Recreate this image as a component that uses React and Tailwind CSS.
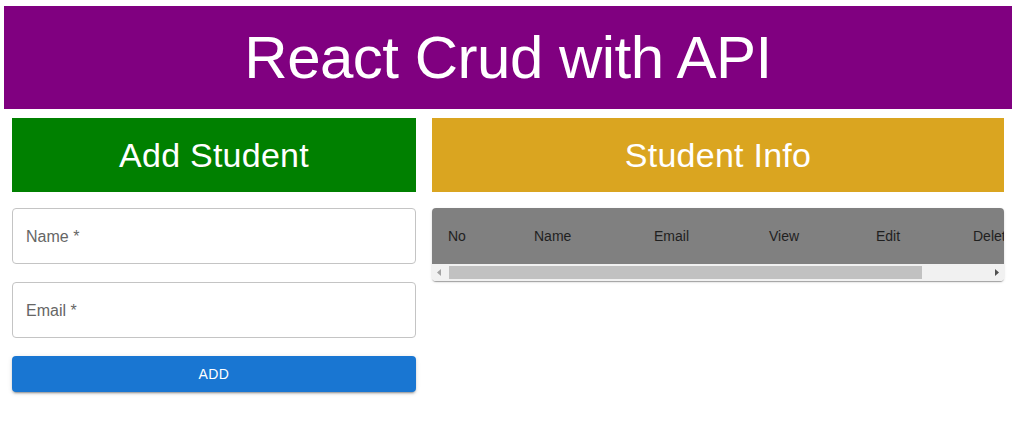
import React from "react";

const font = { fontFamily: '"Liberation Sans", Arial, sans-serif' };

function Field({ label }) {
  return (
    <div className="h-[56px] w-full rounded-[4px] border border-[#c4c4c4] bg-white flex items-center px-[13px]">
      <span className="text-[16px] leading-[23px] text-[#666666]">{label}</span>
    </div>
  );
}

const cols = [
  { label: "No", w: 86 },
  { label: "Name", w: 120 },
  { label: "Email", w: 115 },
  { label: "View", w: 107 },
  { label: "Edit", w: 97 },
  { label: "Delete", w: 125 },
];

export default function App() {
  return (
    <div className="min-h-[429px] w-[1020px] bg-white pt-[6px]" style={font}>
      <div className="ml-1 w-[1008px]">
        <div className="flex h-[103px] items-center justify-center bg-[#800080]">
          <h1 className="text-[60px] leading-[72px] font-light tracking-[-0.5px] text-white">
            React Crud with API
          </h1>
        </div>
        <div className="grid grid-cols-[404px_572px] gap-4 px-2 pt-[9px]">
          <div className="flex flex-col">
            <div className="flex h-[74px] items-center justify-center bg-[#008000]">
              <h2 className="text-[34px] leading-[42px] tracking-[0.25px] text-white">Add Student</h2>
            </div>
            <div className="mt-4 flex flex-col gap-[18px]">
              <Field label="Name *" />
              <Field label="Email *" />
              <button className="h-[36px] w-full rounded-[4px] bg-[#1976d2] text-[14px] font-medium uppercase tracking-[0.4px] text-white shadow-[0_3px_1px_-2px_rgba(0,0,0,0.2),0_2px_2px_0_rgba(0,0,0,0.14),0_1px_5px_0_rgba(0,0,0,0.12)]">
                Add
              </button>
            </div>
          </div>
          <div className="flex flex-col">
            <div className="flex h-[74px] items-center justify-center bg-[#daa520]">
              <h2 className="text-[34px] leading-[42px] tracking-[0.25px] text-white">Student Info</h2>
            </div>
            <div className="mt-4 overflow-hidden rounded-[4px] bg-white shadow-[0_2px_1px_-1px_rgba(0,0,0,0.2),0_1px_1px_0_rgba(0,0,0,0.14),0_1px_3px_0_rgba(0,0,0,0.12)]">
              <div className="overflow-hidden">
                <table className="w-[650px] table-fixed border-collapse bg-[#808080]">
                  <colgroup>
                    {cols.map((c) => (
                      <col key={c.label} style={{ width: c.w }} />
                    ))}
                  </colgroup>
                  <thead>
                    <tr className="h-[56px]">
                      {cols.map((c) => (
                        <th
                          key={c.label}
                          className="px-4 text-left text-[14px] font-normal leading-[24px] text-[#1f1f1f] whitespace-nowrap"
                        >
                          {c.label}
                        </th>
                      ))}
                    </tr>
                  </thead>
                </table>
              </div>
              <div className="flex h-[17px] items-center bg-[#f1f1f1]">
                <div className="flex w-[14px] justify-center">
                  <svg width="4" height="7" viewBox="0 0 4 7">
                    <path d="M4 0 L0 3.5 L4 7 Z" fill="#a3a3a3" />
                  </svg>
                </div>
                <div className="h-[13px] w-[473px] bg-[#c1c1c1] ml-[3px]" />
                <div className="flex-1" />
                <div className="flex w-[14px] justify-center">
                  <svg width="4" height="7" viewBox="0 0 4 7">
                    <path d="M0 0 L4 3.5 L0 7 Z" fill="#505050" />
                  </svg>
                </div>
              </div>
            </div>
          </div>
        </div>
      </div>
    </div>
  );
}
